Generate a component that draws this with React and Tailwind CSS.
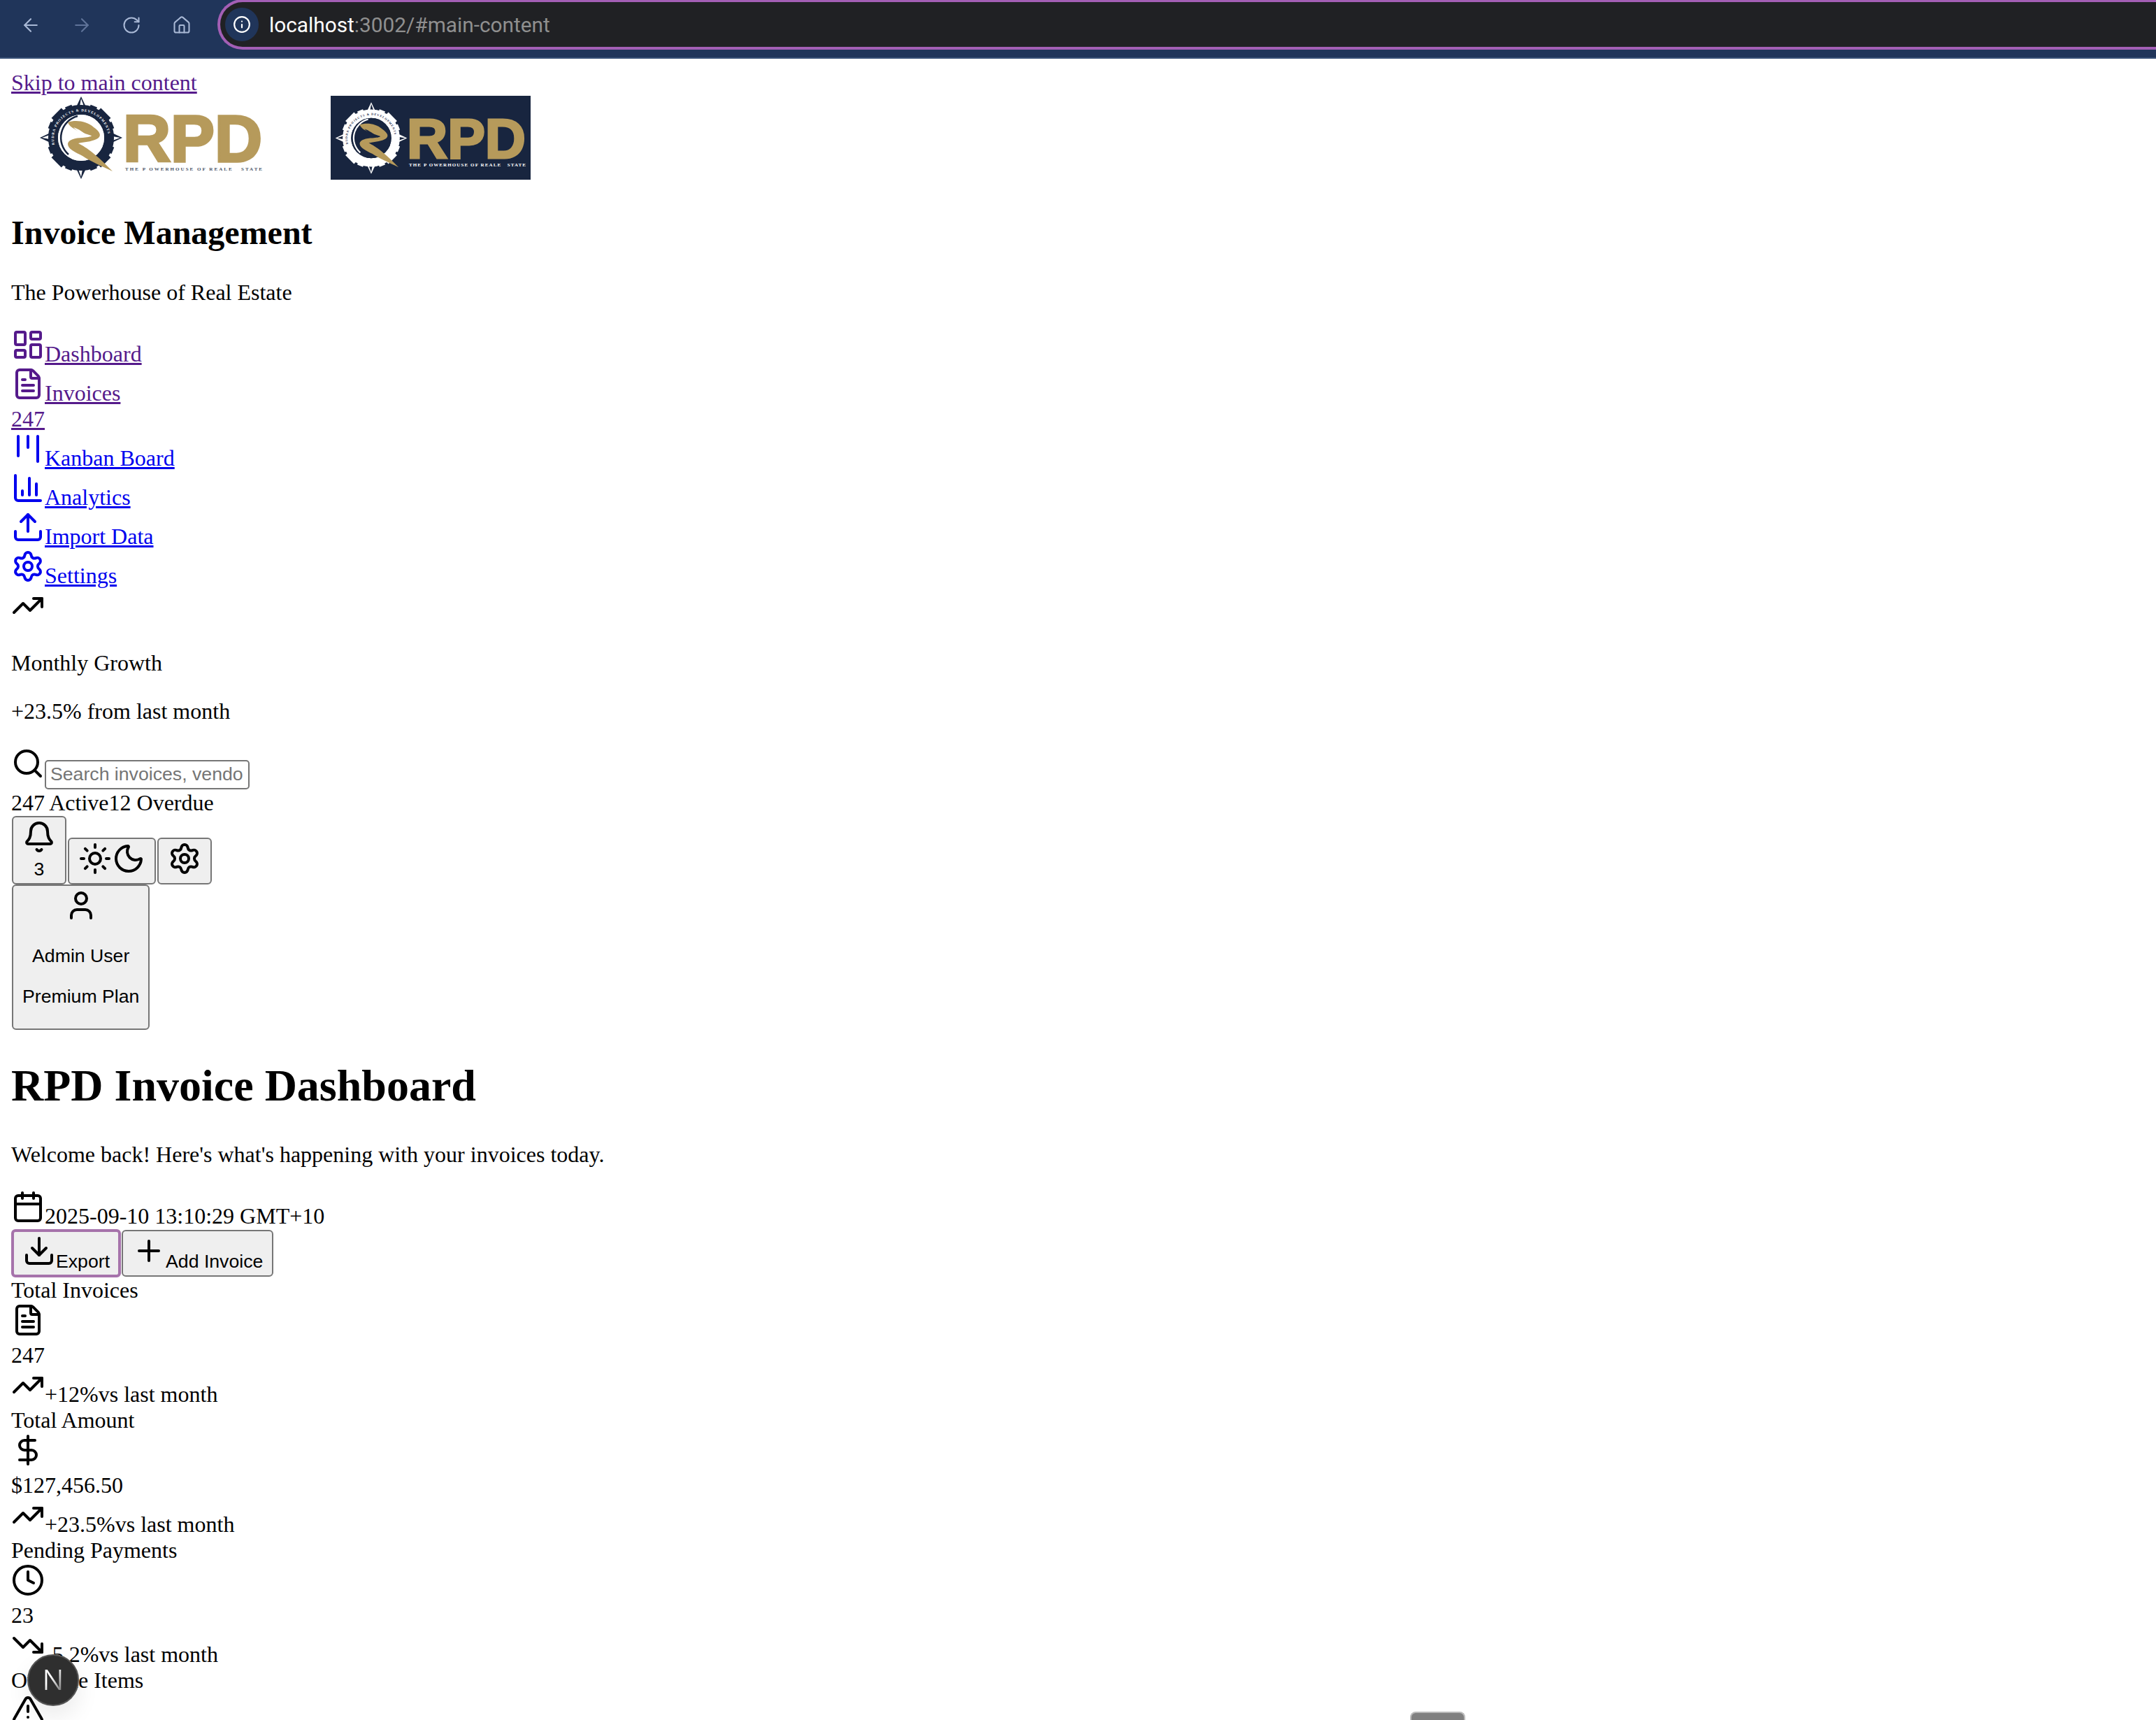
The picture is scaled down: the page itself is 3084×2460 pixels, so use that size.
import {
    AlertTriangle, ArrowLeft, ArrowRight, Bell, Calendar, Clock, ChartColumn, DollarSign, Download, FileText,
    House, Info, Kanban, LayoutDashboard, Moon, Plus, RotateCw, Search, Settings, Sun, TrendingDown, TrendingUp,
    Upload, User,
} from "lucide-react";

const navItems = [
    { label: "Dashboard", icon: LayoutDashboard, visited: true },
    { label: "Invoices", icon: FileText, visited: true, badge: "247" },
    { label: "Kanban Board", icon: Kanban },
    { label: "Analytics", icon: ChartColumn },
    { label: "Import Data", icon: Upload },
    { label: "Settings", icon: Settings },
];

const stats = [
    { label: "Total Invoices", icon: FileText, value: "247", trend: TrendingUp, change: "+12%" },
    { label: "Total Amount", icon: DollarSign, value: "$127,456.50", trend: TrendingUp, change: "+23.5%" },
    { label: "Pending Payments", icon: Clock, value: "23", trend: TrendingDown, change: "-5.2%" },
    { label: "Overdue Items", icon: AlertTriangle, value: "12", trend: TrendingUp, change: "+3" },
];

// lucide svgs are display:block after preflight, the page shows them inline
function Icon({ icon: Glyph }) {
    return <Glyph size={48} className="inline align-baseline" />;
}

function RpdMark({ id, cx, cy, scale, ring, inner, ringText }) {
    return (
        <g transform={`translate(${cx} ${cy}) scale(${scale})`}>
            {[0, 90, 180, 270].map((a) => (
                <g key={a} transform={`rotate(${a})`}>
                    <polygon points="-8,-42 8,-42 0,-59" fill={ring} />
                    <polygon points="0,-56 4,-45 -2,-45" fill={inner} />
                </g>
            ))}
            {[45, 135, 225, 315].map((a) => (
                <rect key={a} x="-10" y="-50" width="20" height="10" fill={ring} transform={`rotate(${a})`} />
            ))}
            {[22, 68, 112, 158, 202, 248, 292, 338].map((a) => (
                <rect key={a} x="-5" y="-49" width="10" height="8" fill={ring} transform={`rotate(${a})`} />
            ))}
            <circle r="40" fill="none" stroke={ring} strokeWidth="14" />
            <circle r="33" fill={inner} />
            <path d="M-5 -31 A32 32 0 0 0 -18 24" fill="none" stroke={ring} strokeWidth="2.5" />
            <path id={id} d="M-38 10 A39 39 0 1 1 38 10" fill="none" />
            <text fontFamily="Liberation Serif" fontWeight="700" fontSize="5" fill={ringText}>
                <textPath href={`#${id}`} textLength="124">RUDRA PROJECTS &amp; DEVELOPMENTS</textPath>
            </text>
            <path
                d="M-19 -22 C-8 -26 8 -24 18 -15 C28 -8 30 -2 22 2 C14 6 4 6 -4 8 C8 14 22 24 45 48 C28 40 14 34 2 26 C-8 21 -19 16 -19 9 C-19 3 -8 0 2 0 C8 -1 14 -1 15 -3 C6 -6 -16 -12 -19 -22 Z"
                fill="#b69a5b"
            />
            <path d="M-11 -15 C-4 -13 4 -7 9 -3 C2 -6 -6 -9 -11 -15 Z" fill={inner} />
        </g>
    );
}

function LogoLight() {
    return (
        <svg width="457" height="120" viewBox="0 0 457 120" className="inline align-baseline">
            <RpdMark id="ring-light" cx={100} cy={60} scale={1} ring="#18253f" inner="#ffffff" ringText="#ffffff" />
            <text x="160" y="93.5" fontFamily="Liberation Sans" fontWeight="700" fontSize="95" fill="#b69a5b" stroke="#b69a5b" strokeWidth="3.5" textLength="199" lengthAdjust="spacingAndGlyphs">RPD</text>
            <text x="163" y="107" fontFamily="Liberation Serif" fontWeight="700" fontSize="7" fill="#4a5468" textLength="196" className="whitespace-pre">THE P OWERHOUSE OF REALE   STATE</text>
        </svg>
    );
}

function LogoDark() {
    return (
        <svg width="286" height="120" viewBox="0 0 286 120" className="inline align-baseline">
            <rect width="286" height="120" fill="#18253f" />
            <RpdMark id="ring-dark" cx={58} cy={60.5} scale={0.87} ring="#ffffff" inner="#18253f" ringText="#18253f" />
            <text x="109" y="88.5" fontFamily="Liberation Sans" fontWeight="700" fontSize="79" fill="#b69a5b" stroke="#b69a5b" strokeWidth="3" textLength="170" lengthAdjust="spacingAndGlyphs">RPD</text>
            <text x="112" y="101" fontFamily="Liberation Serif" fontWeight="700" fontSize="7" fill="#ffffff" textLength="167" className="whitespace-pre">THE P OWERHOUSE OF REALE   STATE</text>
        </svg>
    );
}

function BrowserBar() {
    return (
        <div className="h-[84px] flex items-start bg-[#20355a] border-b-2 border-[#3a5278] overflow-hidden">
            <div className="h-[72px] w-[311px] shrink-0 relative text-[#a9b9d6]">
                <ArrowLeft size={30} strokeWidth={1.75} className="absolute left-[29px] top-[21px]" />
                <ArrowRight size={30} strokeWidth={1.75} className="absolute left-[102px] top-[21px] text-[#5f7399]" />
                <RotateCw size={28} strokeWidth={1.75} className="absolute left-[174px] top-[22px]" />
                <House size={28} strokeWidth={1.75} className="absolute left-[246px] top-[22px]" />
            </div>
            <div className="h-[72px] flex-1 flex items-center bg-[#202124] border-4 border-r-0 border-[#a35fb5] rounded-l-[36px] pl-[7px] -mt-px">
                <div className="h-12 w-12 rounded-full bg-[#20355a] flex items-center justify-center text-white">
                    <Info size={26} strokeWidth={2} />
                </div>
                <span className="ml-[15px] font-['Roboto'] text-[29.8px] text-[#8f8f8f]">
                    <span className="text-white">localhost</span>:3002/#main-content
                </span>
            </div>
        </div>
    );
}

function NavRow({ item }) {
    const color = item.visited ? "text-[#551a8b]" : "text-[#0000ee]";
    return (
        <div className={color}>
            <div>
                <Icon icon={item.icon} />
                <span className="underline">{item.label}</span>
            </div>
            {item.badge && <div><span className="underline">{item.badge}</span></div>}
        </div>
    );
}

function StatBlock({ stat }) {
    return (
        <div>
            <div>{stat.label}</div>
            <div><Icon icon={stat.icon} /></div>
            <div>{stat.value}</div>
            <div>
                <Icon icon={stat.trend} />
                <span>{stat.change}</span>
                <span>vs last month</span>
            </div>
        </div>
    );
}

const buttonClass = "inline-block mx-px px-[13px] py-1 border-2 border-[#767676] rounded-[6px] bg-[#efefef] font-['Liberation_Sans'] text-[26.67px] leading-[normal] text-black align-baseline";

export default function App() {
    return (
        <div className="relative h-[2460px] overflow-hidden bg-white text-black font-['Liberation_Serif'] text-[32px] leading-[normal]">
            <BrowserBar />

            <div className="p-4">
                <aside>
                    <a className="block text-[#551a8b]"><span className="underline">Skip to main content</span></a>
                    <div>
                        <LogoLight />
                        <LogoDark />
                    </div>
                    <h2 className="text-[48px] font-bold my-10 leading-[normal]">Invoice Management</h2>
                    <p className="my-8">The Powerhouse of Real Estate</p>
                    <nav>
                        {navItems.map((item) => (
                            <NavRow key={item.label} item={item} />
                        ))}
                    </nav>
                    <div><Icon icon={TrendingUp} /></div>
                    <p className="my-8">Monthly Growth</p>
                    <p className="my-8">+23.5% from last month</p>
                </aside>

                <header>
                    <div>
                        <Icon icon={Search} />
                        <input
                            type="text"
                            placeholder="Search invoices, vendors..."
                            className="inline-block w-[293px] h-[42px] mb-px pl-[6px] pr-[7px] border-2 border-[#767676] rounded-[5px] font-['Liberation_Sans'] text-[26.67px] placeholder:text-[#757575] align-baseline"
                        />
                    </div>
                    <div>
                        <span>247 Active</span>
                        <span>12 Overdue</span>
                    </div>
                    <div>
                        <button className={buttonClass}>
                            <div><Icon icon={Bell} /></div>
                            <span className="block">3</span>
                        </button>
                        <button className={buttonClass}>
                            <Icon icon={Sun} />
                            <Icon icon={Moon} />
                        </button>
                        <button className={buttonClass}>
                            <Icon icon={Settings} />
                        </button>
                    </div>
                    <button className={buttonClass}>
                        <Icon icon={User} />
                        <p className="my-[26.67px]">Admin User</p>
                        <p className="my-[26.67px]">Premium Plan</p>
                    </button>
                </header>

                <main>
                    <h1 className="text-[64px] font-bold my-[43px] leading-[normal]">RPD Invoice Dashboard</h1>
                    <p className="my-8">Welcome back! Here's what's happening with your invoices today.</p>
                    <div>
                        <Icon icon={Calendar} />
                        <span>2025-09-10 13:10:29 GMT+10</span>
                    </div>
                    <div>
                        <button className="inline-block px-3 py-[3px] border-4 border-[#a673ab] rounded-[6px] bg-[#efefef] font-['Liberation_Sans'] text-[26.67px] leading-[normal] text-black align-baseline">
                            <Icon icon={Download} />Export
                        </button>
                        <button className={buttonClass}>
                            <Icon icon={Plus} />Add Invoice
                        </button>
                    </div>
                    {stats.map((stat) => (
                        <StatBlock key={stat.label} stat={stat} />
                    ))}
                </main>
            </div>

            {/* next dev indicator, sits over the page */}
            <div className="absolute left-[39px] top-[2366px] h-[74px] w-[74px] rounded-full bg-[#2f2f2f] border-2 border-[#555555] shadow-[0_16px_32px_rgba(0,0,0,0.08)] flex items-center justify-center">
                <span className="font-['Inter'] font-light text-[40px] leading-none bg-gradient-to-br from-white from-40% to-white/20 bg-clip-text text-transparent">N</span>
            </div>

            {/* scroll thumb peeking in at the bottom edge */}
            <div className="absolute left-[2017px] top-[2448px] h-3 w-[79px] rounded-t-[8px] bg-[#808080] border-2 border-b-0 border-[#bbbbbb]" />
        </div>
    );
}
